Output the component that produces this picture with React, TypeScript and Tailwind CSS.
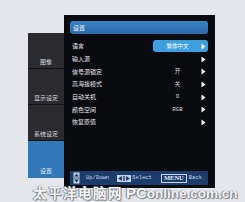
import React from "react";

const cjk = { fontFamily: '"Noto Sans CJK SC", "Noto Sans", sans-serif' };
const mono = { fontFamily: '"Liberation Mono", "DejaVu Sans Mono", monospace' };

function Arrow() {
  return (
    <svg width="5" height="7" viewBox="0 0 5 7" className="block">
      <path d="M0.5 0.5 L4.5 3.5 L0.5 6.5 Z" fill="#f2f4f8" />
    </svg>
  );
}

const rows: { label: string; value?: string }[] = [
  { label: "输入源" },
  { label: "信号源锁定", value: "开" },
  { label: "高海拔模式", value: "关" },
  { label: "自动关机", value: "O" },
  { label: "颜色空间", value: "RGB" },
  { label: "恢复原值" },
];

const side = ["图像", "显示设定", "系统设定"];

export default function App() {
  return (
    <div className="relative w-[245px] h-[202px] overflow-hidden bg-[#e4e6eb]" style={cjk}>
      <div className="flex items-start pl-[28px] pt-[15px]">
        {/* sidebar */}
        <div className="mt-[18px] w-[36px] flex flex-col">
          {side.map((s) => (
            <div
              key={s}
              className="h-[36px] bg-[#2a2a2f] border-b border-[#111216] flex items-end justify-center pb-[3px] text-[6px] leading-none text-[#d8dadf]"
            >
              {s}
            </div>
          ))}
          <div className="h-[37px] bg-[#3378b8] flex items-end justify-center pb-[4px] text-[6px] leading-none text-[#e6eef8]">
            设置
          </div>
        </div>
        {/* main panel */}
        <div className="w-[151px] h-[173px] bg-[#0a0b0f] pt-[6px] pl-[6px] pr-[7px] flex flex-col">
          <div className="h-[13px] rounded-[3px] bg-gradient-to-b from-[#3a83c4] to-[#2a6aa9] flex items-center pl-[3px] text-[6px] leading-none text-white">
            设置
          </div>
          <div className="mt-[6px] flex flex-col">
            <div className="h-[12.7px] flex items-center">
              <span className="pl-[2px] w-[83px] text-[6px] leading-none text-[#e8eaef]">语言</span>
              <div className="h-[12px] flex-1 rounded-[3px] bg-[#3e9fe0] flex items-center">
                <span className="flex-1 text-center pl-[1px] text-[5.5px] leading-none text-white">繁体中文</span>
                <span className="pr-[2px]"><Arrow /></span>
              </div>
            </div>
            {rows.map((r) => (
              <div key={r.label} className="h-[12.7px] flex items-center">
                <span className="pl-[2px] w-[83px] text-[6px] leading-none text-[#e8eaef]">{r.label}</span>
                <span className="flex-1 text-center pl-[1px] text-[5.5px] leading-none text-[#d8dade]" style={r.value === "RGB" || r.value === "O" ? mono : undefined}>
                  {r.value ?? ""}
                </span>
                <span className="pr-[2px]"><Arrow /></span>
              </div>
            ))}
          </div>
          <div className="mt-auto mb-[3px] h-[14px] bg-[#1b3c6c] flex items-center pl-[3px] text-[5.5px] leading-none text-[#cfd8e6]" style={mono}>
            <svg width="7" height="12" viewBox="0 0 7 12" className="block">
              <rect x="0.5" y="0.5" width="6" height="11" fill="#c9d3e2" />
              <path d="M3.5 1.5 L6 4.5 L1 4.5 Z" fill="#1b3c6c" />
              <path d="M3.5 10.5 L6 7.5 L1 7.5 Z" fill="#1b3c6c" />
              <rect x="1" y="5.6" width="5" height="0.8" fill="#1b3c6c" />
            </svg>
            <span className="ml-[6px]">Up/Down</span>
            <svg width="14" height="7" viewBox="0 0 14 7" className="block ml-[8px]">
              <rect x="0" y="0" width="14" height="7" fill="#c9d3e2" />
              <path d="M1 3.5 L5 1 L5 6 Z" fill="#1b3c6c" />
              <path d="M13 3.5 L9 1 L9 6 Z" fill="#1b3c6c" />
              <rect x="6.3" y="1" width="1.4" height="5" fill="#1b3c6c" />
            </svg>
            <span className="ml-[1px]">Select</span>
            <span
              className="ml-[9px] h-[9px] px-[2px] border border-[#c9d3e2] flex items-center text-[6.5px] font-bold text-[#e4eaf3]"
              style={{ fontFamily: '"Liberation Serif", serif' }}
            >
              MENU
            </span>
            <span className="ml-[2px]">Back</span>
          </div>
        </div>
      </div>
      {/* watermark */}
      <div
        className="absolute left-[33px] top-[185px] flex items-center font-bold text-[13.5px] leading-none text-[#f4f5f7] whitespace-nowrap"
        style={{ textShadow: "0 0 1px #6b6e75, 1px 1px 1px #7a7d84, -1px 0 1px #8a8d94" }}
      >
        <span className="tracking-[1.5px]">太平洋电脑网</span>
        <span className="ml-[3px]" style={{ fontFamily: '"Liberation Sans", Arial, sans-serif' }}>
          <span className="text-[15px]">PC</span>online.com.cn
        </span>
      </div>
    </div>
  );
}
